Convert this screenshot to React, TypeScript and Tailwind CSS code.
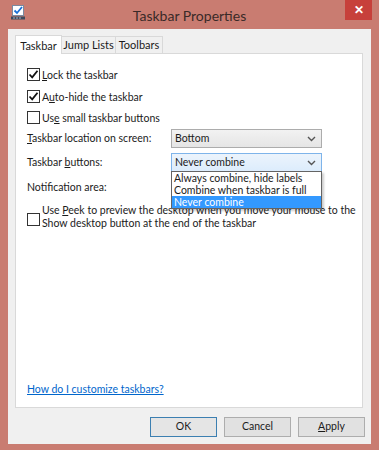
import React from "react";

function Check({ checked }: { checked?: boolean }) {
  return (
    <span className="flex h-[13px] w-[13px] shrink-0 items-center justify-center border border-[#333333] bg-white">
      {checked && (
        <svg width="11" height="11" viewBox="0 0 11 11">
          <path d="M1.5 5.5 L4.2 8.3 L9.5 1.8" fill="none" stroke="#111" strokeWidth="1.8" />
        </svg>
      )}
    </span>
  );
}

function Chevron() {
  return (
    <svg width="9" height="6" viewBox="0 0 9 6">
      <path d="M1 1 L4.5 4.5 L8 1" fill="none" stroke="#555" strokeWidth="1.4" />
    </svg>
  );
}

function WindowIcon() {
  return (
    <svg width="16" height="16" viewBox="0 0 16 16">
      <rect x="2.5" y="0.5" width="11" height="10" fill="#fff" stroke="#7a8aa0" />
      <path d="M4.5 5.5 L7 8 L12 2" fill="none" stroke="#1a6fd6" strokeWidth="1.8" />
      <rect x="1" y="11.5" width="14" height="3" fill="#3d4a5c" />
      <rect x="3" y="12.5" width="2" height="1" fill="#9fb2c8" />
      <rect x="6" y="12.5" width="2" height="1" fill="#9fb2c8" />
      <rect x="9" y="12.5" width="2" height="1" fill="#9fb2c8" />
    </svg>
  );
}

export default function App() {
  return (
    <div
      className="flex h-[450px] w-[379px] flex-col whitespace-nowrap bg-[#c97c71] text-[10.5px] text-[#1b1b1b]"
      style={{ fontFamily: 'Lato, "Noto Sans", sans-serif' }}
    >
      {/* title bar */}
      <div className="grid h-[29px] shrink-0 grid-cols-[1fr_auto_1fr] items-start">
        <div className="pl-[10px] pt-[5px]">
          <WindowIcon />
        </div>
        <div className="pt-[5px] text-[14px] text-[#3a2a28]">Taskbar Properties</div>
        <div className="flex justify-end pr-[7px]">
          <div className="flex h-[20px] w-[27px] items-center justify-center bg-[#c7403b] text-[12px] font-bold text-white">
            ✕
          </div>
        </div>
      </div>

      {/* client area */}
      <div className="mx-[8px] flex h-[415px] flex-col bg-[#f0f0f0]">
        <div className="ml-[7px] mr-[8px] mt-[6px]">
          {/* tabs */}
          <div className="flex h-[18px] items-end text-[11px]">
            <div className="relative z-10 -mb-px flex h-[19px] w-[47px] items-start justify-center border border-b-0 border-[#d9d9d9] bg-white pt-[2px]">
              Taskbar
            </div>
            <div className="flex h-[17px] w-[54px] items-center justify-center border border-b-0 border-l-0 border-[#d9d9d9] bg-[#f0f0f0]">
              Jump Lists
            </div>
            <div className="flex h-[17px] w-[47px] items-center justify-center border border-b-0 border-l-0 border-[#d9d9d9] bg-[#f0f0f0]">
              Toolbars
            </div>
          </div>

          {/* tab panel */}
          <div className="relative flex h-[355px] flex-col border border-[#d9d9d9] bg-white pl-[11px] pt-[14px]">
            <div className="flex h-[22px] items-start gap-[2px]">
              <Check checked />
              <span><u>L</u>ock the taskbar</span>
            </div>
            <div className="flex h-[21px] items-start gap-[2px]">
              <Check checked />
              <span>A<u>u</u>to-hide the taskbar</span>
            </div>
            <div className="flex h-[18px] items-start gap-[2px]">
              <Check />
              <span>Us<u>e</u> small taskbar buttons</span>
            </div>

            <div className="flex h-[19px] items-center">
              <span className="w-[144px]"><u>T</u>askbar location on screen:</span>
              <div className="flex h-[19px] w-[151px] items-center justify-between border border-[#acacac] bg-gradient-to-b from-[#f2f2f2] to-[#e5e5e5] pl-[3px] pr-[5px]">
                <span>Bottom</span>
                <Chevron />
              </div>
            </div>
            <div className="relative mt-[5px] flex h-[19px] items-center">
              <span className="w-[144px]">Taskbar <u>b</u>uttons:</span>
              <div className="flex h-[19px] w-[151px] items-center justify-between border border-[#7eb4ea] bg-gradient-to-b from-[#ecf4fc] to-[#dcecfc] pl-[3px] pr-[5px]">
                <span>Never combine</span>
                <Chevron />
              </div>
              {/* open dropdown list */}
              <div className="absolute left-[144px] top-[18px] z-20 flex w-[151px] flex-col border border-[#646464] bg-white leading-[12px] shadow-[2px_2px_2px_rgba(0,0,0,0.2)]">
                <span className="h-[12px] pl-[2px]">Always combine, hide labels</span>
                <span className="h-[12px] pl-[2px]">Combine when taskbar is full</span>
                <span className="h-[12px] bg-[#3399ff] pl-[2px] text-white">Never combine</span>
              </div>
            </div>
            <div className="mt-[6px] flex h-[20px] items-center">
              <span>Notification area:</span>
            </div>

            <div className="mt-[6px] flex items-start gap-[2px]">
              <span className="mt-[9px]"><Check /></span>
              <span className="leading-[13px]">
                Use <u>P</u>eek to preview the desktop when you move your mouse to the
                <br />
                Show desktop button at the end of the taskbar
              </span>
            </div>

            <div className="mt-auto pb-[9px]">
              <span className="text-[#0066cc] underline">How do I customize taskbars?</span>
            </div>
          </div>
        </div>

        {/* buttons */}
        <div className="mr-[6px] mt-[9px] flex justify-end gap-[7px]">
          <div className="flex h-[20px] w-[67px] items-center justify-center border border-[#3c7fb1] bg-[#e5e5e5]">
            OK
          </div>
          <div className="flex h-[20px] w-[67px] items-center justify-center border border-[#adadad] bg-[#e1e1e1]">
            Cancel
          </div>
          <div className="flex h-[20px] w-[67px] items-center justify-center border border-[#adadad] bg-[#e1e1e1]">
            <span><u>A</u>pply</span>
          </div>
        </div>
      </div>
    </div>
  );
}
